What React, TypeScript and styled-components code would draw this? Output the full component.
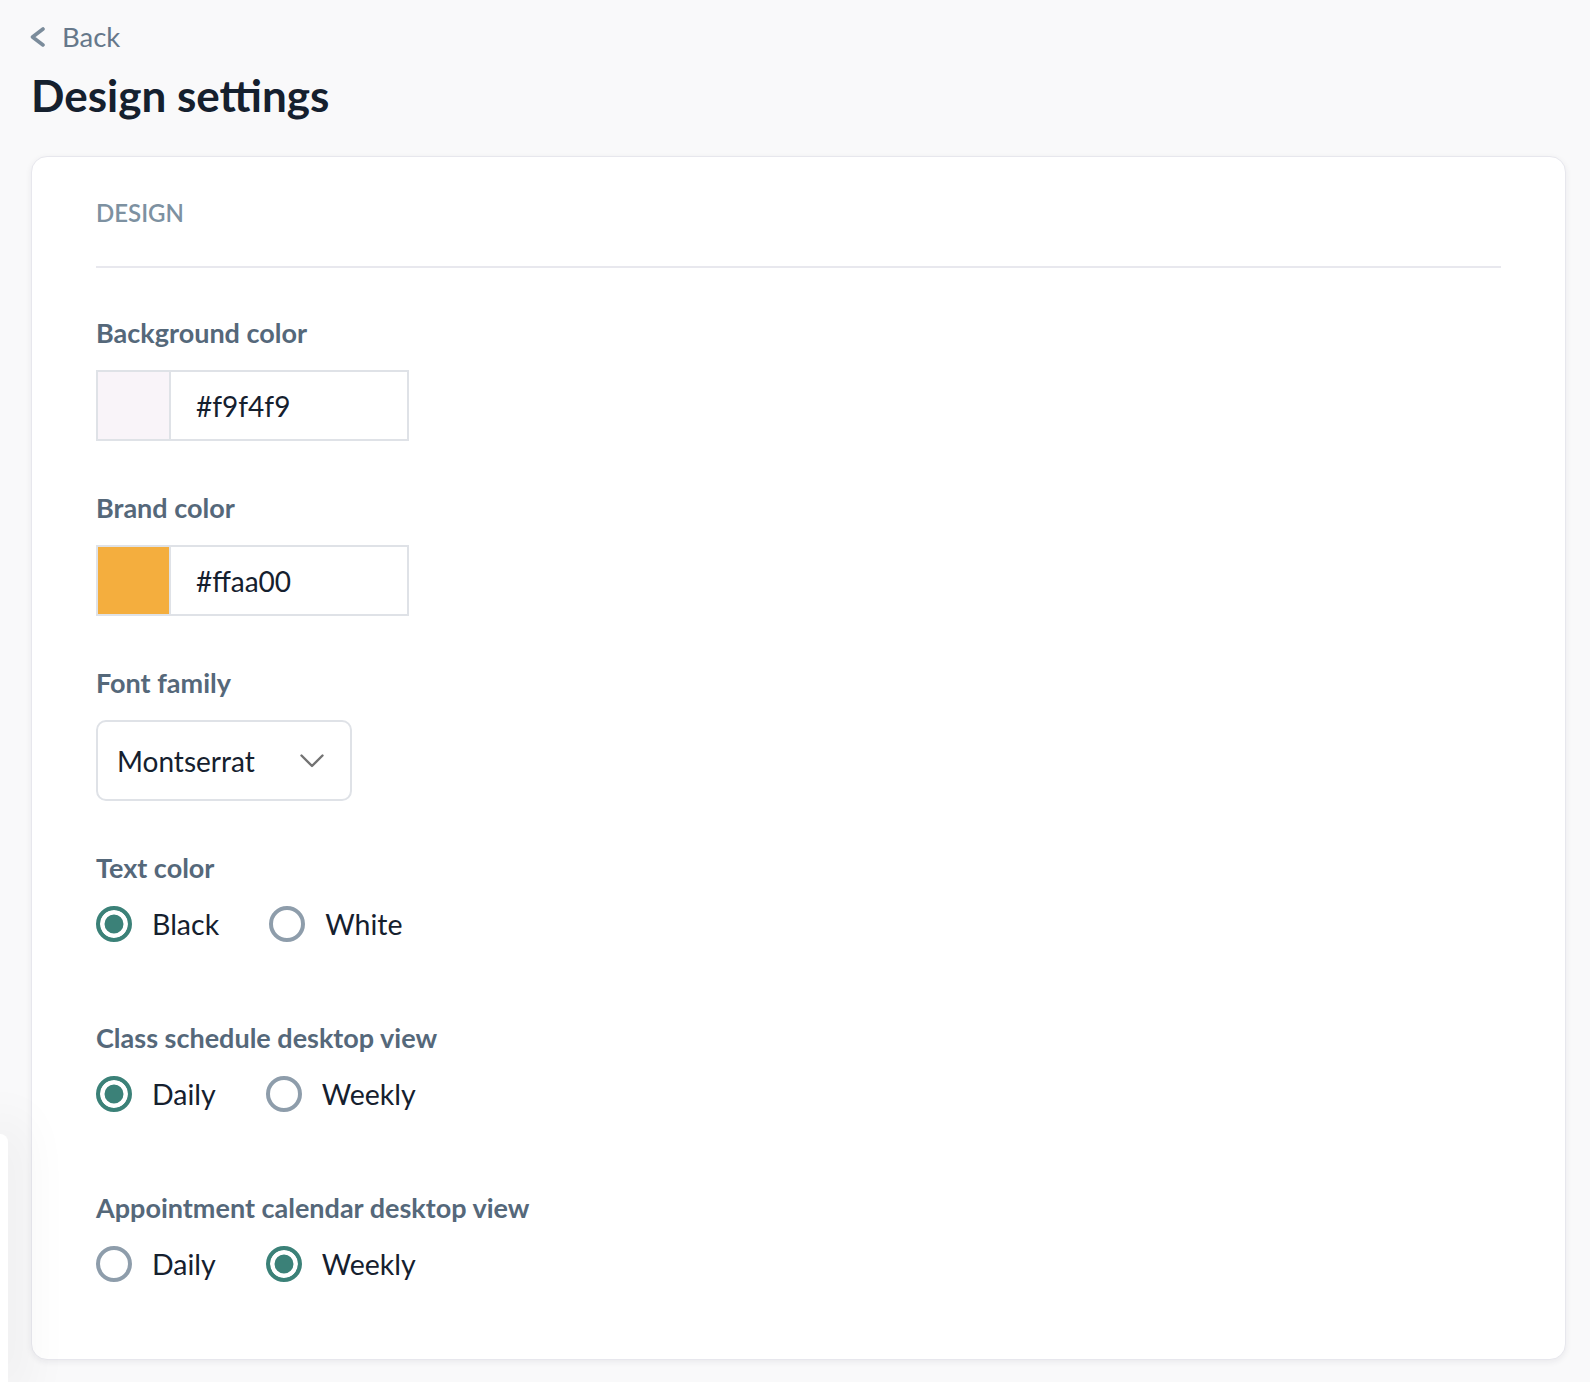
import styled, { createGlobalStyle } from "styled-components";

const GlobalStyle = createGlobalStyle`
  html, body {
    margin: 0;
    padding: 0;
    background: #f9f9fa;
    font-family: Lato, "Open Sans", "Liberation Sans", sans-serif;
    -webkit-font-smoothing: antialiased;
  }
`;

const Page = styled.div`
  display: flex;
  flex-direction: column;
  padding: 21px 24px 22px 31px;
  min-height: 1382px;
  box-sizing: border-box;
`;

const BackLink = styled.a`
  display: flex;
  align-items: center;
  gap: 16px;
  width: fit-content;
  height: 32px;
  margin-left: -1px;
  font-size: 27.5px;
  line-height: 32px;
  color: #66788a;
  text-decoration: none;
  cursor: pointer;
`;

const Title = styled.h1`
  margin: 16px 0 35px;
  font-size: 44px;
  line-height: 52px;
  font-weight: 700;
  color: #15202e;
`;

const Card = styled.section`
  display: flex;
  flex-direction: column;
  padding: 41px 64px 48px;
  background: #fff;
  border: 1px solid #e7e7ed;
  border-radius: 16px;
  box-shadow: 0 2px 6px rgba(30, 30, 60, 0.07);
`;

const CardHeader = styled.div`
  padding-bottom: 38px;
  margin-bottom: 50px;
  border-bottom: 2px solid #e8e8ee;
  font-size: 24px;
  line-height: 30px;
  font-weight: 600;
  color: #7d91a1;
  text-transform: uppercase;
`;

const Fields = styled.div`
  display: flex;
  flex-direction: column;
  gap: 52px;
`;

const Field = styled.div<{ $extra?: number }>`
  display: flex;
  flex-direction: column;
  padding-bottom: ${(p) => p.$extra ?? 0}px;
`;

const Label = styled.div`
  margin-bottom: 22px;
  font-size: 27px;
  line-height: 30px;
  font-weight: 700;
  color: #55687a;
`;

const ColorBox = styled.div`
  display: flex;
  width: 313px;
  height: 71px;
  box-sizing: border-box;
  border: 2px solid #dfe2e7;
  background: #fff;
`;

const Swatch = styled.div<{ $color: string }>`
  width: 71px;
  flex-shrink: 0;
  background: ${(p) => p.$color};
  border-right: 2px solid #dfe2e7;
`;

const HexValue = styled.div`
  display: flex;
  align-items: center;
  padding-left: 25px;
  font-size: 28px;
  color: #15202e;
`;

const Select = styled.div`
  display: flex;
  align-items: center;
  justify-content: space-between;
  width: 256px;
  height: 81px;
  box-sizing: border-box;
  padding: 0 26px 0 19px;
  border: 2px solid #dfe2e7;
  border-radius: 10px;
  font-size: 28px;
  color: #15202e;
`;

const RadioRow = styled.div`
  display: flex;
  align-items: center;
  gap: 50px;
  height: 36px;
  margin-top: 1px;
`;

const RadioOption = styled.label`
  display: flex;
  align-items: center;
  gap: 20px;
  font-size: 28.5px;
  color: #15202e;
  cursor: pointer;
`;

const RadioInput = styled.input`
  appearance: none;
  margin: 0;
  width: 36px;
  height: 36px;
  box-sizing: border-box;
  border-radius: 50%;
  border: 4px solid #8e9dab;
  background: #fff;

  &:checked {
    border: 4.5px solid #3b8178;
    background: #3b8178;
    box-shadow: inset 0 0 0 4.5px #fff;
  }
`;

const EdgePanel = styled.div`
  position: absolute;
  left: 0;
  top: 1134px;
  width: 8px;
  height: 248px;
  background: #fff;
  border-top-right-radius: 10px;
  box-shadow: 0 0 50px 16px rgba(0, 0, 0, 0.05);
`;

function ChevronLeft() {
  return (
    <svg width="16" height="22" viewBox="0 0 16 22" fill="none">
      <path
        d="M13 3L2.5 11L13 19"
        stroke="#7b8c9b"
        strokeWidth="3.6"
        strokeLinecap="round"
        strokeLinejoin="round"
      />
    </svg>
  );
}

function ChevronDown() {
  return (
    <svg width="24" height="14" viewBox="0 0 24 14" fill="none">
      <path
        d="M1.5 1.5L12 12L22.5 1.5"
        stroke="#737373"
        strokeWidth="2.4"
        strokeLinecap="round"
        strokeLinejoin="round"
      />
    </svg>
  );
}

type Option = { label: string; checked?: boolean };

function RadioGroup({ name, options }: { name: string; options: Option[] }) {
  return (
    <RadioRow>
      {options.map((o) => (
        <RadioOption key={o.label}>
          <RadioInput type="radio" name={name} defaultChecked={o.checked} />
          {o.label}
        </RadioOption>
      ))}
    </RadioRow>
  );
}

export default function App() {
  return (
    <>
      <GlobalStyle />
      <Page>
        <BackLink>
          <ChevronLeft />
          Back
        </BackLink>
        <Title>Design settings</Title>
        <Card>
          <CardHeader>Design</CardHeader>
          <Fields>
            <Field>
              <Label>Background color</Label>
              <ColorBox>
                <Swatch $color="#f9f4f9" />
                <HexValue>#f9f4f9</HexValue>
              </ColorBox>
            </Field>
            <Field>
              <Label>Brand color</Label>
              <ColorBox>
                <Swatch $color="#f4ae3e" />
                <HexValue>#ffaa00</HexValue>
              </ColorBox>
            </Field>
            <Field>
              <Label>Font family</Label>
              <Select>
                Montserrat
                <ChevronDown />
              </Select>
            </Field>
            <Field $extra={29}>
              <Label>Text color</Label>
              <RadioGroup
                name="text-color"
                options={[{ label: "Black", checked: true }, { label: "White" }]}
              />
            </Field>
            <Field $extra={29}>
              <Label>Class schedule desktop view</Label>
              <RadioGroup
                name="class-view"
                options={[{ label: "Daily", checked: true }, { label: "Weekly" }]}
              />
            </Field>
            <Field $extra={29}>
              <Label>Appointment calendar desktop view</Label>
              <RadioGroup
                name="appointment-view"
                options={[{ label: "Daily" }, { label: "Weekly", checked: true }]}
              />
            </Field>
          </Fields>
        </Card>
      </Page>
      <EdgePanel />
    </>
  );
}
